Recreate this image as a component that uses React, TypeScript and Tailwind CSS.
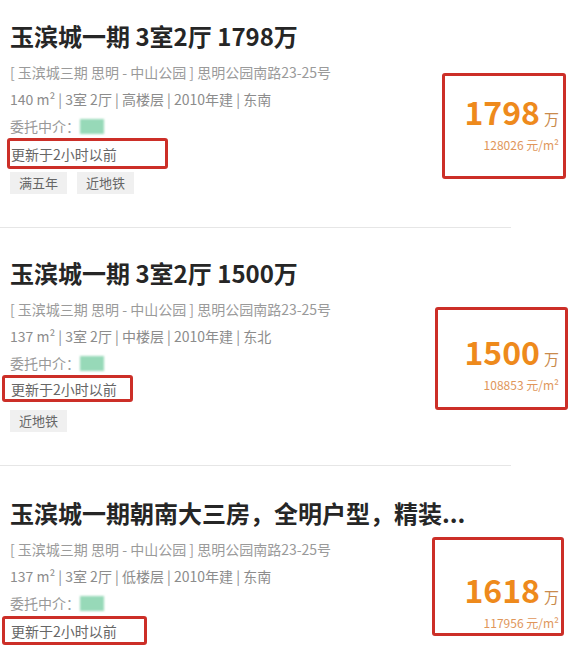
import React from "react"

interface Listing {
  title: string
  area: string
  rooms: string
  floor: string
  built: string
  facing: string
  tags: string[]
  price: string
  unitPrice: string
  pt: string
  update: string
  tagGap: string
  box: string
  numPad: string
}

const listings: Listing[] = [
  {
    title: "玉滨城一期 3室2厅 1798万",
    area: "140",
    rooms: "3室 2厅",
    floor: "高楼层",
    built: "2010年建",
    facing: "东南",
    tags: ["满五年", "近地铁"],
    price: "1798",
    unitPrice: "128026",
    pt: "pt-[20px]",
    update: "-ml-[3px] mt-[-2px] w-[161px] h-[31px]",
    tagGap: "mt-[3px]",
    box: "mt-[14px] mr-[6px] w-[124px] h-[106px] pr-[4px]",
    numPad: "pt-[15px]",
  },
  {
    title: "玉滨城一期 3室2厅 1500万",
    area: "137",
    rooms: "3室 2厅",
    floor: "中楼层",
    built: "2010年建",
    facing: "东北",
    tags: ["近地铁"],
    price: "1500",
    unitPrice: "108853",
    pt: "pt-[29px]",
    update: "-ml-[8px] mt-[-2px] w-[131px] h-[27px]",
    tagGap: "mt-[8px]",
    box: "mt-[11px] mr-[4px] w-[133px] h-[103px] pr-[6px]",
    numPad: "pt-[21px]",
  },
  {
    title: "玉滨城一期朝南大三房，全明户型，精装...",
    area: "137",
    rooms: "3室 2厅",
    floor: "低楼层",
    built: "2010年建",
    facing: "东南",
    tags: [],
    price: "1618",
    unitPrice: "117956",
    pt: "pt-[31px]",
    update: "-ml-[8px] mt-[-1px] w-[145px] h-[29px]",
    tagGap: "",
    box: "mt-[1px] mr-[8px] w-[132px] h-[99px] pr-[2px]",
    numPad: "pt-[29px]",
  },
]

function ListingItem({ item, last }: { item: Listing; last: boolean }) {
  return (
    <div>
      <div className={`${item.pt} pl-[10px] ${item.tags.length ? "pb-[33px]" : ""}`}>
        <h2 className="text-[24px] leading-[32px] font-bold text-[#262626] whitespace-nowrap mb-[7px]">
          {item.title}
        </h2>
        <div className="flex justify-between items-start">
          <div className="text-[14px] leading-[27px]">
            <div className="text-[#9a9a9a] whitespace-nowrap">
              [ 玉滨城三期 思明 - 中山公园 ] 思明公园南路23-25号
            </div>
            <div className="text-[#8c8c8c] whitespace-nowrap">
              {item.area} m² | {item.rooms} | {item.floor} | {item.built} | {item.facing}
            </div>
            <div className="text-[#999] flex items-center h-[27px]">
              <span>委托中介：</span>
              <span className="inline-block w-[24px] h-[15px] bg-[#97d9b8] blur-[1px]" />
            </div>
            <div
              className={`${item.update} flex items-center border-[3px] border-[#cc2f28] rounded-[3px] pl-[1px] text-[#666] leading-none`}
            >
              <span className={item.update.includes("ml-[8px]") ? "ml-[5px]" : ""}>更新于2小时以前</span>
            </div>
            {item.tags.length > 0 && (
              <div className={`flex gap-[10px] ${item.tagGap}`}>
                {item.tags.map((t) => (
                  <span
                    key={t}
                    className="h-[22px] px-[9px] bg-[#f0f0f0] text-[#666] text-[13px] leading-[22px]"
                  >
                    {t}
                  </span>
                ))}
              </div>
            )}
          </div>
          <div
            className={`${item.box} border-[3px] border-[#cc2f28] rounded-[3px] flex flex-col items-end shrink-0`}
          >
            <div className={`${item.numPad} flex items-baseline`}>
              <span className="text-[32px] leading-[40px] font-bold text-[#ee8a1c]">{item.price}</span>
              <span className="ml-[4px] text-[15px] text-[#c98a4c]">万</span>
            </div>
            <div className="mt-[4px] text-[12px] leading-[20px] text-[#e0965a] whitespace-nowrap">
              {item.unitPrice} 元/m²
            </div>
          </div>
        </div>
      </div>
      {!last && <div className="w-[511px] h-px bg-[#e6e6e6]" />}
    </div>
  )
}

export default function App() {
  return (
    <div
      className="w-[572px] h-[645px] overflow-hidden bg-white"
      style={{ fontFamily: '"Noto Sans CJK SC", "Noto Sans", sans-serif' }}
    >
      {listings.map((l, i) => (
        <ListingItem key={i} item={l} last={i === listings.length - 1} />
      ))}
    </div>
  )
}
